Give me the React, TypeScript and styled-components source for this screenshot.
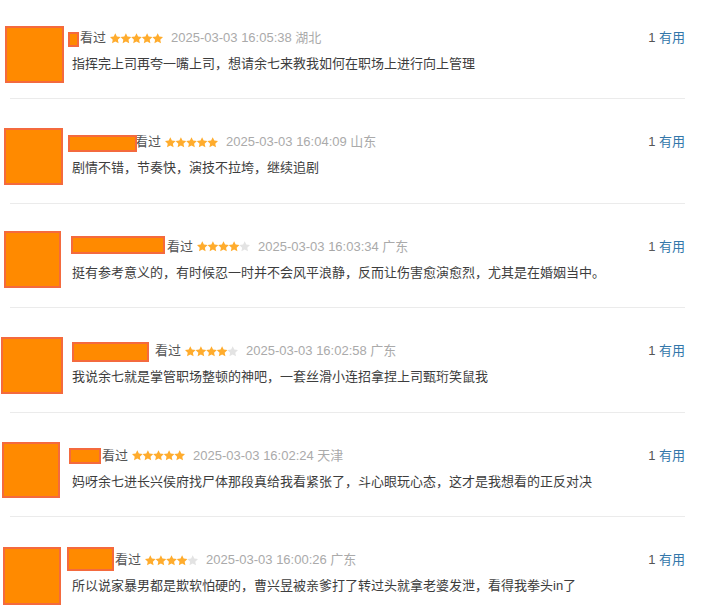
import styled, { createGlobalStyle } from 'styled-components';

type Box = { l: number; t: number; w: number; h: number };

type Review = {
  stars: number;
  date: string;
  loc: string;
  text: string;
  nameW: number;
  nameBox: Box;
  avatarBox: Box;
};

const reviews: Review[] = [
  {
    stars: 5,
    date: '2025-03-03 16:05:38',
    loc: '湖北',
    text: '指挥完上司再夸一嘴上司，想请余七来教我如何在职场上进行向上管理',
    nameW: 8,
    nameBox: { l: -4, t: 4, w: 11, h: 15 },
    avatarBox: { l: -5, t: -2, w: 59, h: 57 },
  },
  {
    stars: 5,
    date: '2025-03-03 16:04:09',
    loc: '山东',
    text: '剧情不错，节奏快，演技不拉垮，继续追剧',
    nameW: 63,
    nameBox: { l: -4, t: 3, w: 69, h: 17 },
    avatarBox: { l: -6, t: -4, w: 59, h: 57 },
  },
  {
    stars: 4,
    date: '2025-03-03 16:03:34',
    loc: '广东',
    text: '挺有参考意义的，有时候忍一时并不会风平浪静，反而让伤害愈演愈烈，尤其是在婚姻当中。',
    nameW: 95,
    nameBox: { l: -1, t: -1, w: 94, h: 18 },
    avatarBox: { l: -6, t: -6, w: 57, h: 57 },
  },
  {
    stars: 4,
    date: '2025-03-03 16:02:58',
    loc: '广东',
    text: '我说余七就是掌管职场整顿的神吧，一套丝滑小连招拿捏上司甄珩笑鼠我',
    nameW: 83,
    nameBox: { l: 0, t: 1, w: 77, h: 20 },
    avatarBox: { l: -9, t: -4, w: 62, h: 57 },
  },
  {
    stars: 5,
    date: '2025-03-03 16:02:24',
    loc: '天津',
    text: '妈呀余七进长兴侯府找尸体那段真给我看紧张了，斗心眼玩心态，这才是我想看的正反对决',
    nameW: 30,
    nameBox: { l: -3, t: 2, w: 32, h: 16 },
    avatarBox: { l: -8, t: -4, w: 58, h: 56 },
  },
  {
    stars: 4,
    date: '2025-03-03 16:00:26',
    loc: '广东',
    text: '所以说家暴男都是欺软怕硬的，曹兴昱被亲爹打了转过头就拿老婆发泄，看得我拳头in了',
    nameW: 43,
    nameBox: { l: -5, t: -3, w: 47, h: 24 },
    avatarBox: { l: -7, t: -3, w: 58, h: 58 },
  },
];

const STAR =
  '5.5,0.2 7.09,3.62 10.83,4.07 8.07,6.63 8.79,10.33 5.5,8.5 2.21,10.33 2.93,6.63 0.17,4.07 3.91,3.62';

function Stars({ value }: { value: number }) {
  return (
    <StarSvg width="53" height="11" viewBox="0 0 53 11">
      {[0, 1, 2, 3, 4].map((i) => (
        <polygon
          key={i}
          points={STAR}
          transform={`translate(${i * 10.6 - 0.2} 0)`}
          fill={i < value ? '#ffac2d' : '#e3e3e3'}
        />
      ))}
    </StarSvg>
  );
}

function boxStyle(b: Box) {
  return { left: b.l, top: b.t, width: b.w, height: b.h };
}

export default function App() {
  return (
    <>
      <GlobalStyle />
      <List>
        {reviews.map((r, i) => (
          <Item key={i}>
            <Avatar>
              <Redact style={boxStyle(r.avatarBox)} />
            </Avatar>
            <Body>
              <Header>
                <Name style={{ width: r.nameW }}>
                  <Redact style={boxStyle(r.nameBox)} />
                </Name>
                <Watched>看过</Watched>
                <Stars value={r.stars} />
                <Meta>
                  {r.date} {r.loc}
                </Meta>
                <Votes>
                  <Count>1</Count> <Useful>有用</Useful>
                </Votes>
              </Header>
              <Text>{r.text}</Text>
            </Body>
          </Item>
        ))}
      </List>
    </>
  );
}

const GlobalStyle = createGlobalStyle`
  body {
    margin: 0;
    background: #fff;
    font-family: "Liberation Sans", Arial, "Noto Sans CJK SC", sans-serif;
    font-size: 13px;
    color: #494949;
  }
`;

const List = styled.div`
  padding: 0 18px 0 10px;
`;

const Item = styled.div`
  display: flex;
  padding: 33px 0 24.6px;
  border-bottom: 1px solid #ebebeb;

  &:first-child {
    padding-top: 28px;
    padding-bottom: 24px;
  }
`;

const Avatar = styled.div`
  position: relative;
  flex-shrink: 0;
  width: 48px;
  height: 46px;
  margin-right: 14px;
`;

const Redact = styled.div`
  position: absolute;
  box-sizing: border-box;
  background: #ff8a00;
  border: 2px solid #f46a3e;
`;

const Body = styled.div`
  flex: 1;
  display: flex;
  flex-direction: column;
  gap: 6px;
  height: 46px;
`;

const Header = styled.div`
  display: flex;
  align-items: center;
  height: 20px;
  line-height: 20px;
`;

const Name = styled.div`
  position: relative;
  flex-shrink: 0;
  height: 20px;
`;

const Watched = styled.span`
  color: #555;
  margin-right: 4px;
`;

const StarSvg = styled.svg`
  display: block;
  margin-right: 8px;
`;

const Meta = styled.span`
  color: #aaa;
`;

const Votes = styled.span`
  margin-left: auto;
  white-space: pre;
`;

const Count = styled.span`
  color: #555;
`;

const Useful = styled.span`
  color: #37a;
`;

const Text = styled.p`
  margin: 0;
  height: 20px;
  line-height: 20px;
  color: #3d3d3d;
  white-space: nowrap;
`;
